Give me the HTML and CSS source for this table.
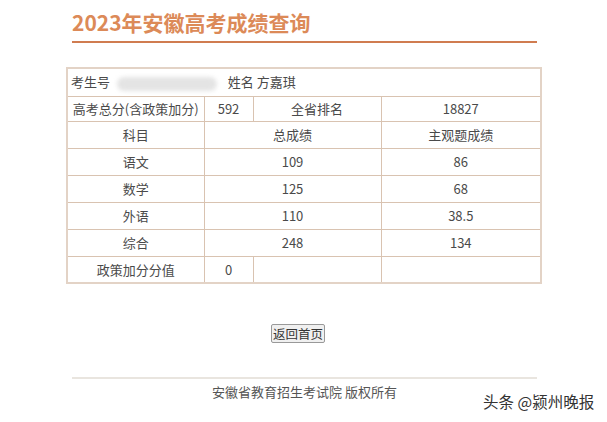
FILE: index.html
```html
<!DOCTYPE html>
<html lang="zh-CN">
<head>
<meta charset="utf-8">
<title>2023年安徽高考成绩查询</title>
<link rel="stylesheet" href="styles.css">
</head>
<body>
<div class="page">
  <h1 class="title">2023年安徽高考成绩查询</h1>
  <div class="rule"></div>
  <table class="score">
    <colgroup>
      <col class="c1"><col class="c2"><col class="c3"><col class="c4">
    </colgroup>
    <tr class="r-id">
      <td colspan="4" class="idcell">考生号 <span class="blur"></span> <span class="name">姓名 方嘉琪</span></td>
    </tr>
    <tr class="r-total">
      <td>高考总分(含政策加分)</td><td>592</td><td>全省排名</td><td>18827</td>
    </tr>
    <tr><td>科目</td><td colspan="2">总成绩</td><td>主观题成绩</td></tr>
    <tr><td>语文</td><td colspan="2">109</td><td>86</td></tr>
    <tr><td>数学</td><td colspan="2">125</td><td>68</td></tr>
    <tr><td>外语</td><td colspan="2">110</td><td>38.5</td></tr>
    <tr><td>综合</td><td colspan="2">248</td><td>134</td></tr>
    <tr class="r-last"><td>政策加分分值</td><td>0</td><td></td><td></td></tr>
  </table>
  <div class="actions"><button class="back" type="button">返回首页</button></div>
  <div class="footer">安徽省教育招生考试院 版权所有</div>
</div>
<div class="watermark">头条 @颍州晚报</div>
</body>
</html>
```
FILE: styles.css
```css
html, body {
  margin: 0;
  padding: 0;
  background: #ffffff;
}
body {
  font-family: "Noto Sans CJK SC", "Noto Sans", sans-serif;
  color: #444;
  width: 607px;
  height: 422px;
  overflow: hidden;
  position: relative;
}
.page {
  padding: 0 67px 0 66px;
  width: 474px;
}
.title {
  margin: 0 0 0 6px;
  padding-top: 8px;
  height: 32px;
  font-size: 21px;
  line-height: 28px;
  font-weight: 700;
  color: #dc8a58;
  letter-spacing: 0;
}
.rule {
  margin: 1px 3px 0 6px;
  height: 2px;
  background: #d07c50;
}
.score {
  margin-top: 24px;
  width: 474px;
  border-collapse: collapse;
  table-layout: fixed;
  font-size: 13px;
  background: #ffffff;
  border: 2px solid #e3d3c6;
}
.c1 { width: 137px; }
.c2 { width: 49px; }
.c3 { width: 128px; }
.c4 { width: 160px; }
.score td {
  border: 1px solid #d9c3b1;
  text-align: center;
  height: 26px;
  padding: 0;
  line-height: 16px;
  color: #4a4a4a;
}
.score .r-id td { height: 27px; }
.score .r-total td { height: 24px; }
.score .r-last td { height: 25px; }
.score td.idcell {
  text-align: left;
  padding-left: 3px;
}
.blur {
  display: inline-block;
  vertical-align: middle;
  width: 100px;
  height: 14px;
  margin: 0 6px 0 4px;
  background: #e4e4e4;
  border-radius: 7px;
  filter: blur(2px);
}
.name { margin-left: 2px; }
.actions {
  display: flex;
  justify-content: center;
  padding-right: 10px;
  margin-top: 40px;
}
.back {
  font-family: "Noto Sans CJK SC", sans-serif;
  font-size: 12.5px;
  line-height: 15px;
  padding: 1px 1px;
  color: #333;
  background: #f0f0f0;
  border: 1px solid #999;
  border-radius: 2px;
}
.footer {
  margin: 34px 3px 0 6px;
  border-top: 2px solid #e9e5df;
  padding-top: 4px;
  text-align: center;
  font-size: 13px;
  line-height: 18px;
  color: #555;
}
.watermark {
  position: absolute;
  left: 483px;
  top: 392px;
  font-size: 15.5px;
  line-height: 18px;
  color: #333;
  text-shadow: 0 0 2px #fff, 0 0 2px #fff;
}
```
